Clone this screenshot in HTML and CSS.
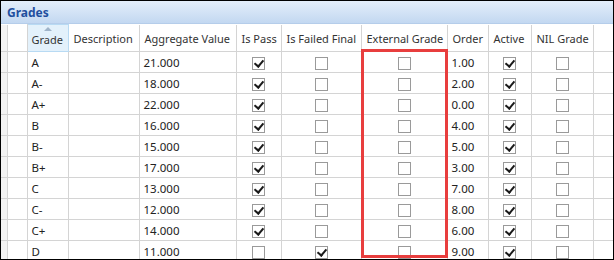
FILE: index.html
```html
<!DOCTYPE html>
<html>
<head>
    <meta charset="UTF-8">
    <title>Grades</title>
    <link rel="stylesheet" href="styles.css">
</head>
<body>
    <div class="panel">
        <div class="title">Grades</div>
        <table class="grid">
            <colgroup>
                <col class="c-ind"><col class="c-sel"><col class="c-grade"><col class="c-desc">
                <col class="c-agg"><col class="c-pass"><col class="c-fail"><col class="c-ext">
                <col class="c-order"><col class="c-active"><col class="c-nil"><col class="c-rest">
            </colgroup>
            <thead>
                <tr>
                    <th class="ind"></th><th></th>
                    <th class="sorted">Grade</th>
                    <th>Description</th>
                    <th>Aggregate Value</th>
                    <th>Is Pass</th>
                    <th>Is Failed Final</th>
                    <th>External Grade</th>
                    <th>Order</th>
                    <th>Active</th>
                    <th>NIL Grade</th>
                    <th></th>
                </tr>
            </thead>
            <tbody>
                <tr><td class="ind"></td><td></td><td>A</td><td></td><td>21.000</td><td class="ck"><span class="cb on"></span></td><td class="ck"><span class="cb"></span></td><td class="ck"><span class="cb"></span></td><td>1.00</td><td class="ck"><span class="cb on"></span></td><td class="ck"><span class="cb"></span></td><td></td></tr>
                <tr><td class="ind"></td><td></td><td>A-</td><td></td><td>18.000</td><td class="ck"><span class="cb on"></span></td><td class="ck"><span class="cb"></span></td><td class="ck"><span class="cb"></span></td><td>2.00</td><td class="ck"><span class="cb on"></span></td><td class="ck"><span class="cb"></span></td><td></td></tr>
                <tr><td class="ind"></td><td></td><td>A+</td><td></td><td>22.000</td><td class="ck"><span class="cb on"></span></td><td class="ck"><span class="cb"></span></td><td class="ck"><span class="cb"></span></td><td>0.00</td><td class="ck"><span class="cb on"></span></td><td class="ck"><span class="cb"></span></td><td></td></tr>
                <tr><td class="ind"></td><td></td><td>B</td><td></td><td>16.000</td><td class="ck"><span class="cb on"></span></td><td class="ck"><span class="cb"></span></td><td class="ck"><span class="cb"></span></td><td>4.00</td><td class="ck"><span class="cb on"></span></td><td class="ck"><span class="cb"></span></td><td></td></tr>
                <tr><td class="ind"></td><td></td><td>B-</td><td></td><td>15.000</td><td class="ck"><span class="cb on"></span></td><td class="ck"><span class="cb"></span></td><td class="ck"><span class="cb"></span></td><td>5.00</td><td class="ck"><span class="cb on"></span></td><td class="ck"><span class="cb"></span></td><td></td></tr>
                <tr><td class="ind"></td><td></td><td>B+</td><td></td><td>17.000</td><td class="ck"><span class="cb on"></span></td><td class="ck"><span class="cb"></span></td><td class="ck"><span class="cb"></span></td><td>3.00</td><td class="ck"><span class="cb on"></span></td><td class="ck"><span class="cb"></span></td><td></td></tr>
                <tr><td class="ind"></td><td></td><td>C</td><td></td><td>13.000</td><td class="ck"><span class="cb on"></span></td><td class="ck"><span class="cb"></span></td><td class="ck"><span class="cb"></span></td><td>7.00</td><td class="ck"><span class="cb on"></span></td><td class="ck"><span class="cb"></span></td><td></td></tr>
                <tr><td class="ind"></td><td></td><td>C-</td><td></td><td>12.000</td><td class="ck"><span class="cb on"></span></td><td class="ck"><span class="cb"></span></td><td class="ck"><span class="cb"></span></td><td>8.00</td><td class="ck"><span class="cb on"></span></td><td class="ck"><span class="cb"></span></td><td></td></tr>
                <tr><td class="ind"></td><td></td><td>C+</td><td></td><td>14.000</td><td class="ck"><span class="cb on"></span></td><td class="ck"><span class="cb"></span></td><td class="ck"><span class="cb"></span></td><td>6.00</td><td class="ck"><span class="cb on"></span></td><td class="ck"><span class="cb"></span></td><td></td></tr>
                <tr><td class="ind"></td><td></td><td>D</td><td></td><td>11.000</td><td class="ck"><span class="cb"></span></td><td class="ck"><span class="cb on"></span></td><td class="ck"><span class="cb"></span></td><td>9.00</td><td class="ck"><span class="cb on"></span></td><td class="ck"><span class="cb"></span></td><td></td></tr>
            </tbody>
        </table>
        <!-- annotation box around External Grade -->
        <div class="highlight"></div>
    </div>
</body>
</html>
```

FILE: styles.css
```css
body {
    margin: 0;
    font-family: "Noto Sans", "Open Sans", sans-serif;
    font-size: 11px;
    color: #222;
}

.panel {
    position: relative;
    width: 614px;
    height: 260px;
    box-sizing: border-box;
    border: 1px solid #000;
    overflow: hidden;
    background: #fff;
}

.title {
    height: 23px;
    line-height: 23px;
    padding-left: 6px;
    font-weight: bold;
    font-size: 12px;
    color: #1f4f9e;
    background: linear-gradient(#e4eefa, #c3d8f1);
    border-bottom: 1px solid #b5cdea;
    box-sizing: border-box;
}

.grid {
    border-collapse: collapse;
    table-layout: fixed;
    width: 612px;
}

.c-ind { width: 6px; }
.c-sel { width: 20px; }
.c-grade { width: 41px; }
.c-desc { width: 71px; }
.c-agg { width: 97px; }
.c-pass { width: 45px; }
.c-fail { width: 80px; }
.c-ext { width: 86px; }
.c-order { width: 41px; }
.c-active { width: 43px; }
.c-nil { width: 62px; }
.c-rest { width: 20px; }

.grid th,
.grid td {
    border: 1px solid #d4d4d4;
    padding: 0 4px;
    white-space: nowrap;
    overflow: hidden;
    text-align: left;
}

.grid th {
    height: 24px;
    font-weight: normal;
    font-size: 11px;
    color: #333;
    padding: 2px 5px 0;
}

.grid td {
    height: 20px;
    font-size: 11.5px;
}

.grid tr > :first-child {
    border-left: none;
}

.grid tr > :last-child {
    border-right: none;
}

.grid thead th {
    border-top: none;
}

.grid .ind {
    background: #f3f3f3;
    padding: 0;
}

.grid th.sorted {
    position: relative;
    background: #e3f1fb;
    border: 1px solid #b8daf3;
    padding-left: 4px;
}

.grid th.sorted::before {
    content: "";
    position: absolute;
    top: 2px;
    left: 50%;
    margin-left: -4px;
    border-left: 4px solid transparent;
    border-right: 4px solid transparent;
    border-bottom: 4px solid #9fb4c9;
}

.grid td.ck {
    text-align: center;
    padding: 0;
}

.cb {
    display: inline-block;
    position: relative;
    width: 13px;
    height: 13px;
    box-sizing: border-box;
    border: 1px solid #9a9a9a;
    background: #fff;
    vertical-align: middle;
}

.cb.on::after {
    content: "";
    position: absolute;
    left: 3px;
    top: 0px;
    width: 4px;
    height: 7px;
    border-right: 2px solid #1a1a1a;
    border-bottom: 2px solid #1a1a1a;
    transform: rotate(40deg);
}

.highlight {
    position: absolute;
    left: 360px;
    top: 48px;
    width: 87px;
    height: 209px;
    border: 3px solid #e83e3e;
    box-sizing: border-box;
}
```
